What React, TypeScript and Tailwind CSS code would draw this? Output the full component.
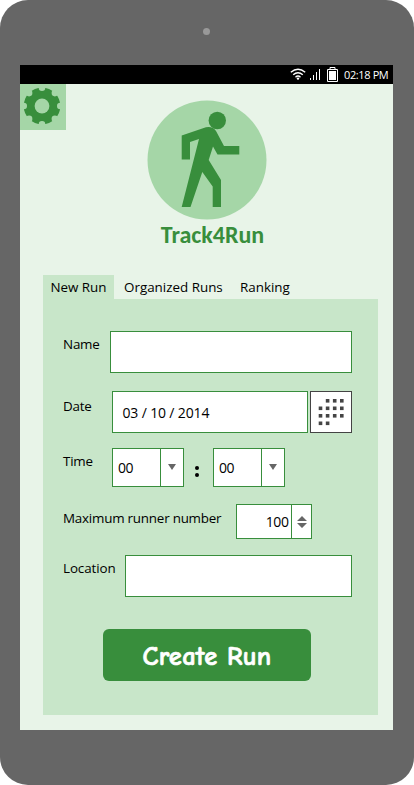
import type { ReactNode } from "react";

function Label({ children, className }: { children: ReactNode; className: string }) {
  return <label className={`shrink-0 whitespace-nowrap leading-5 ${className}`}>{children}</label>;
}

function StatusBar() {
  return (
    <div className="flex h-[19px] items-center bg-black pl-[270px] text-white">
      <svg width="48" height="19" viewBox="0 0 48 19" fill="none" stroke="#fff">
        <path d="M0.8 7.2Q8 1.2 15.2 7.2M3.2 9.8Q8 5.6 12.8 9.8M5.5 12.2Q8 10 10.5 12.2" strokeWidth="1.4" />
        <circle cx="8" cy="13.6" r="1.2" fill="#fff" stroke="none" />
        <path d="M20.5 13v2M23.5 10v5M26.5 7v8M29.5 4v11" strokeWidth="1" />
        <path d="M40 4V2.5h5V4M37.5 4.5h10v12h-10z" strokeWidth="1" />
        <path d="M39 6h7v9h-7z" fill="#fff" stroke="none" />
      </svg>
      <span className="ml-[6px] whitespace-nowrap text-[11px] leading-[18px] tracking-[-0.38px]">02:18 PM</span>
    </div>
  );
}

const gearNotches = [
  [22, 3.7], [34.9, 9.1], [40.3, 22], [34.9, 34.9],
  [22, 40.3], [9.1, 34.9], [3.7, 22], [9.1, 9.1],
];

function Gear() {
  return (
    <svg width="46" height="46" viewBox="0 0 46 46">
      <circle cx="22" cy="22" r="18.3" fill="#388e3c" />
      <circle cx="22" cy="22" r="7.4" fill="#a5d6a7" />
      {gearNotches.map(([x, y]) => (
        <circle key={`${x}-${y}`} cx={x} cy={y} r="3.3" fill="#a5d6a7" />
      ))}
    </svg>
  );
}

function Logo() {
  return (
    <svg width="120" height="120" viewBox="0 0 120 120" fill="#388e3c">
      <circle cx="60" cy="60" r="59.5" fill="#a5d6a7" />
      <circle cx="70.3" cy="20.5" r="8.7" />
      <path d="M34.7 35.5L56 28.2Q65 25 69 31L77 46H92.300V54.500H70.500L66 46.500L61.700 60L74 80V107H65.700V86.500L55.300 72L43.500 107H34.700L52 39L43 42V59.500H34.700Z" />
    </svg>
  );
}

function TimeSelect() {
  return (
    <div className="flex h-[39px] w-[72px] shrink-0 border border-[#388e3c] bg-white">
      <span className="w-[48px] border-r border-[#388e3c] pl-[5px] text-[14px] leading-[38px] tracking-[-0.5px]">00</span>
      <svg className="ml-[7px] mt-[15px]" width="8" height="6" viewBox="0 0 8 6">
        <path d="M0 0h8L4 6z" fill="#666" />
      </svg>
    </div>
  );
}

const calendarDots = [
  [1, 0], [2, 0], [3, 0],
  [0, 1], [1, 1], [2, 1], [3, 1],
  [0, 2], [1, 2], [2, 2], [3, 2],
  [0, 3], [1, 3],
];

function CalendarButton() {
  return (
    <button className="ml-[2px] h-[42px] w-[42px] border border-[#444] bg-white">
      <svg className="block" width="40" height="40" viewBox="0 0 40 40" fill="#444">
        {calendarDots.map(([x, y]) => (
          <rect key={`${x}-${y}`} x={7.7 + x * 7.1} y={7 + y * 7.5} width="3.6" height="3.6" />
        ))}
      </svg>
    </button>
  );
}

export default function App() {
  return (
    <div className="h-[785px] w-[414px] bg-white font-['Open_Sans','Noto_Sans',sans-serif] text-[13.4px] text-black">
      <div className="flex h-full flex-col rounded-[28px] bg-[#666] pl-[20px] pr-[21px]">
        <div className="flex h-[65px] shrink-0 justify-center pt-[28px]">
          <span className="h-[7px] w-[7px] rounded-full bg-[#999]" />
        </div>
        <main className="h-[665px] bg-[#e8f4e8]">
          <StatusBar />
          <header className="flex h-[191px] items-start">
            <button className="h-[46px] w-[46px] bg-[#a5d6a7]"><Gear /></button>
            <div className="ml-[81px] mt-4 flex w-[120px] flex-col items-center">
              <Logo />
              <h1 className="whitespace-nowrap pl-[11px] font-[Carlito,Lato,sans-serif] text-[24px] font-bold leading-[29px] text-[#388e3c]">Track4Run</h1>
            </div>
          </header>
          <nav className="ml-[23px] flex h-[24px] items-stretch leading-[25px]">
            <span className="w-[71px] whitespace-nowrap bg-[#c8e6c9] pl-[7.5px] tracking-[-0.05px]">New Run</span>
            <span className="w-[116px] whitespace-nowrap pl-[10px]">Organized Runs</span>
            <span className="whitespace-nowrap pl-[10px]">Ranking</span>
          </nav>
          <section className="ml-[23px] h-[416px] w-[335px] bg-[#c8e6c9] pl-5 pt-[32px]">
            <div className="flex h-[60px]">
              <Label className="mt-[3px] w-[47px] tracking-[-0.2px]">Name</Label>
              <div className="h-[42px] w-[242px] border border-[#388e3c] bg-white" />
            </div>
            <div className="flex h-[57px]">
              <Label className="mt-[5px] w-[49px] tracking-[-0.2px]">Date</Label>
              <div className="h-[42px] w-[196px] border border-[#388e3c] bg-white pl-[9.5px] text-[14px] leading-[42px] tracking-[-0.15px]">03 / 10 / 2014</div>
              <CalendarButton />
            </div>
            <div className="flex h-[56px]">
              <Label className="mt-[3px] w-[49px] tracking-[-0.2px]">Time</Label>
              <TimeSelect />
              <span className="flex w-[29px] flex-col items-center gap-[3px] pr-[4px] pt-[18px]">
                <i className="h-[4px] w-[4px] rounded-full bg-black" />
                <i className="h-[4px] w-[4px] rounded-full bg-black" />
              </span>
              <TimeSelect />
            </div>
            <div className="flex h-[51px]">
              <Label className="mt-[4px] w-[173px] tracking-[-0.22px]">Maximum runner number</Label>
              <div className="flex h-[35px] w-[76px] border border-[#388e3c] bg-white">
                <span className="w-[55px] border-r border-[#388e3c] pr-[2.5px] text-right text-[14px] leading-[34px] tracking-[-0.4px]">100</span>
                <svg className="ml-[5px] mt-[11px]" width="10" height="12" viewBox="0 0 10 12" fill="#666">
                  <path d="M0 5L5 0l5 5zM0 7h10l-5 5z" />
                </svg>
              </div>
            </div>
            <div className="flex h-[74px]">
              <Label className="mt-[3px] w-[62px] tracking-[-0.1px]">Location</Label>
              <div className="h-[42px] w-[227px] border border-[#388e3c] bg-white" />
            </div>
            <button className="ml-[40px] h-[52px] w-[208px] rounded-[6px] bg-[#388e3c] pt-[4px] font-['Comic_Sans_MS','Comic_Neue',Lato,sans-serif] text-[26.5px] font-bold leading-none tracking-[0.25px] text-white [-webkit-text-stroke:0.7px_white]">Create Run</button>
          </section>
        </main>
      </div>
    </div>
  );
}
